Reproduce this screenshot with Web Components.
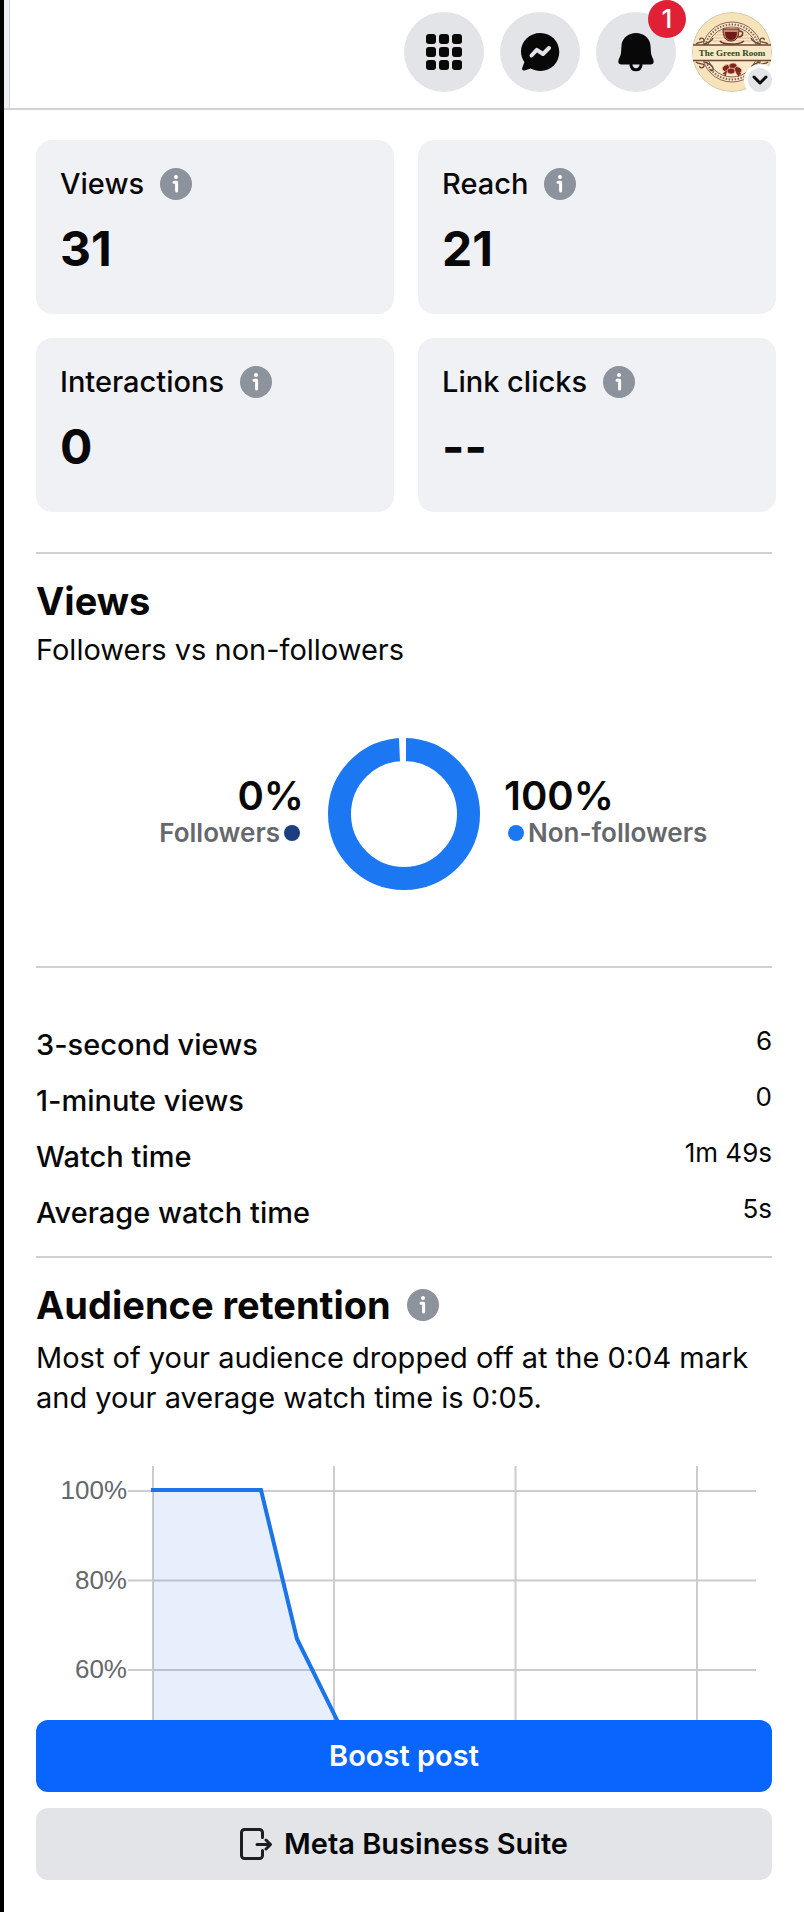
<!DOCTYPE html>
<html lang="en">
<head>
<meta charset="utf-8">
<meta name="viewport" content="width=device-width, initial-scale=1">
<title>Post insights</title>
<style>
  html { background: #fff; }
  body { margin: 0; font-family: Inter, "Liberation Sans", sans-serif; color: #080809; }
</style>
</head>
<body>
<insights-page></insights-page>
<script>
const define = (name, html) => {
  const template = document.createElement('template');
  template.innerHTML = html;
  customElements.define(name, class extends HTMLElement {
    constructor() {
      super();
      this.attachShadow({ mode: 'open' }).append(template.content.cloneNode(true));
    }
  });
};

define('info-button', `
  <style>
    :host { display: block; flex: none; width: 32px; height: 32px; }
    button { display: block; width: 32px; height: 32px; padding: 0; border: 0; background: none; }
    svg { display: block; }
  </style>
  <button type="button" aria-label="More information">
    <svg width="32" height="32" viewBox="0 0 32 32" aria-hidden="true">
      <circle cx="16" cy="16" r="16" fill="#8c939d"/>
      <circle cx="16" cy="9" r="2" fill="#fff"/>
      <path d="M14 14.3h2.6v8.6" fill="none" stroke="#fff" stroke-width="3" stroke-linecap="round" stroke-linejoin="round"/>
    </svg>
  </button>`);

define('round-button', `
  <style>
    :host { display: block; position: relative; width: 80px; height: 80px; }
    button { display: grid; place-items: center; width: 80px; height: 80px; padding: 0; border: 0;
      border-radius: 50%; background: #e2e4e8; color: #080809; overflow: hidden; }
    ::slotted([slot=badge]) { position: absolute; }
  </style>
  <button type="button"><slot></slot></button><slot name="badge"></slot>`);

define('top-bar', `
  <style>
    :host { display: flex; border-bottom: 2px solid #d0d1d3; height: 108px; }
    .edge { width: 5px; background: #eff0f4; border-right: 1px solid #d0d1d4; }
    nav { flex: 1; display: flex; justify-content: flex-end; gap: 16px; padding: 12px 32px 0 0; }
    svg { display: block; }
    .count { top: -12px; right: -10px; width: 38px; height: 38px; border-radius: 50%; background: #e02135;
      color: #fff; font-size: 26px; line-height: 38px; font-weight: 500; text-align: center; }
    .more { right: -4px; bottom: -4px; width: 24px; height: 24px; border: 4px solid #fff; border-radius: 50%;
      background: #e2e4e8; }
  </style>
  <div class="edge"></div>
  <nav aria-label="Account">
    <round-button>
      <svg width="36" height="36" viewBox="0 0 36 36" fill="#080809" role="img" aria-label="Menu">
        <rect width="10" height="10" rx="3"/><rect x="13" width="10" height="10" rx="3"/><rect x="26" width="10" height="10" rx="3"/>
        <rect y="13" width="10" height="10" rx="3"/><rect x="13" y="13" width="10" height="10" rx="3"/><rect x="26" y="13" width="10" height="10" rx="3"/>
        <rect y="26" width="10" height="10" rx="3"/><rect x="13" y="26" width="10" height="10" rx="3"/><rect x="26" y="26" width="10" height="10" rx="3"/>
      </svg>
    </round-button>
    <round-button>
      <svg width="40" height="40" viewBox="0 0 40 40" role="img" aria-label="Messenger">
        <path d="M20.500 1C9.800 1 1 9 1 19.500c0 4.200 1.400 7.700 3.400 10.600L2.200 36c-.6 1.700.6 2.900 2.300 2.400l6.200-1.800c2.900 1.500 6 2.400 9.800 2.400C31 39 39.300 30.500 39.300 20S31 1 20.500 1z" fill="#080809"/>
        <path d="M11.500 23.500l5.300-5.700 6.200 4.200 6-6" fill="none" stroke="#e2e4e8" stroke-width="4" stroke-linecap="round" stroke-linejoin="round"/>
      </svg>
    </round-button>
    <round-button>
      <svg width="40" height="40" viewBox="0 0 40 40" role="img" aria-label="Notifications">
        <path d="M20 1C12.500 1 6 6 5.500 13.500L5 21c-.2 3-2.700 6-2.700 8.500 0 2 1.200 2.900 3 2.900h29.400c1.800 0 3-.9 3-2.900 0-2.500-2.500-5.500-2.700-8.500l-.5-7.500C34 6 27.500 1 20 1z" fill="#080809"/>
        <path d="M14.800 32c.4 4 2.600 5.800 5.200 5.800s4.800-1.800 5.200-5.800" fill="none" stroke="#080809" stroke-width="3"/>
      </svg>
      <span slot="badge" class="count">1</span>
    </round-button>
    <round-button>
      <svg width="80" height="80" viewBox="0 0 80 80" role="img" aria-label="The Green Room profile">
        <circle cx="40" cy="40" r="39.500" fill="#f7e3ba" stroke="#d8c9a8"/>
        <g fill="none" stroke="#8a6350">
          <circle cx="40" cy="40" r="30" fill="#f8e9ca" stroke-width="1"/>
          <circle cx="40" cy="40" r="27.500" stroke-width="2" stroke-dasharray="1.500 1.500"/>
          <circle cx="40" cy="40" r="25"/>
          <path d="M26 20h28M23 23h34M21 26h38M20 29h40" stroke="#e2b994"/>
        </g>
        <path d="M1 33h78v15H1z" fill="#f8e8c6"/>
        <g fill="none" stroke="#6d4534" stroke-width="1.300">
          <path d="M1 33h78M1 48.500h78"/>
          <path d="M4 32c3-3 9-1 8-4s-5-2-4 0M12 32c4-1 8-3 9-6M76 32c-3-3-9-1-8-4s5-2 4 0M68 32c-4-1-8-3-9-6"/>
          <path d="M4 50c3 3 9 1 8 4s-5 2-4 0M12 50c4 1 8 3 9 6s-3 4-3 1M76 50c-3 3-9 1-8 4s5 2 4 0M68 50c-4 1-8 3-9 6"/>
        </g>
        <path d="M31 17h16c0 7-2 12-8 12s-8-5-8-12z" fill="#c58a70" stroke="#5c2219"/>
        <path d="M33 20h12c0 5-2 8-6 8s-6-3-6-8z" fill="#6f1c18"/>
        <path d="M47 19c5-1 5 6-1 6M28 29c3 4 19 4 24 0" fill="none" stroke="#6d3528" stroke-width="1.500"/>
        <g fill="#80261d" stroke="#e9bfa0" stroke-width=".8">
          <ellipse cx="34" cy="56" rx="4" ry="3" transform="rotate(-30 34 56)"/><ellipse cx="41" cy="54" rx="4" ry="3"/>
          <ellipse cx="46" cy="58" rx="4" ry="3" transform="rotate(30 46 58)"/><ellipse cx="39" cy="59" rx="4" ry="3"/>
        </g>
        <path d="M31 62l3-2-1 4M47 64l-2-3 4 1" fill="none" stroke="#80261d" stroke-width="1.500"/>
        <text x="40" y="44" text-anchor="middle" font-family="'Liberation Serif', serif" font-weight="700" font-size="9" fill="#244c1d">The Green Room</text>
      </svg>
      <span slot="badge" class="more">
        <svg width="24" height="24" viewBox="0 0 24 24" fill="none" stroke="#080809" stroke-width="3" stroke-linecap="round" stroke-linejoin="round" aria-hidden="true"><path d="M6 9l6 6 6-6"/></svg>
      </span>
    </round-button>
  </nav>`);

define('metric-card', `
  <style>
    :host { display: block; padding: 28px 24px 36px; border-radius: 16px; background: #f0f1f5; }
    .label { display: flex; align-items: center; gap: 16px; font-size: 29px; line-height: 32px; font-weight: 500; white-space: nowrap; }
    .value { margin-top: 20px; font-size: 48px; line-height: 58px; font-weight: 700; }
  </style>
  <div class="label"><slot name="label"></slot><info-button></info-button></div>
  <div class="value"><slot></slot></div>`);

define('page-section', `
  <style>
    :host { display: block; border-top: 2px solid #d0d1d3; }
    ::slotted(h2) { display: flex; align-items: center; gap: 16px; margin: 24px 0 0; font-size: 38px; line-height: 46px; font-weight: 700; }
    ::slotted(p) { margin: 6px 0 0; font-size: 29px; line-height: 40px; }
    :host([roomy]) ::slotted(p) { margin-top: 10px; }
  </style>
  <slot></slot>`);

define('follower-split', `
  <style>
    :host { display: grid; grid-template-columns: 1fr 152px 1fr; align-items: center; gap: 24px; padding: 68px 0 76px; }
    svg { display: block; }
    .side { padding-bottom: 4px; }
    .left { justify-self: end; text-align: right; }
    .share { font-size: 40px; line-height: 42px; font-weight: 600; }
    .name { display: flex; align-items: center; gap: 4px; padding: 0 4px; font-size: 26px; line-height: 32px; font-weight: 600; color: #65686c; }
    .name i { width: 16px; height: 16px; border-radius: 50%; background: #1b77f2; }
    .left i { background: #1d3f81; }
  </style>
  <div class="side left"><div class="share">0%</div><div class="name">Followers<i></i></div></div>
  <svg width="152" height="152" viewBox="0 0 152 152" role="img" aria-label="Non-followers 100%, followers 0%">
    <circle cx="76" cy="76" r="64.500" fill="none" stroke="#1b77f2" stroke-width="23"/>
    <path d="M71 0h7v24h-6z" fill="#fff"/>
  </svg>
  <div class="side"><div class="share">100%</div><div class="name"><i></i>Non-followers</div></div>`);

define('watch-stats', `
  <style>
    :host { display: block; padding: 57px 0 23px; }
    dl { display: grid; gap: 16px; margin: 0; }
    div { display: flex; justify-content: space-between; }
    dt { font-size: 29px; line-height: 40px; font-weight: 500; }
    dd { margin: 0; font-size: 26px; line-height: 32px; }
  </style>
  <dl>
    <div><dt>3-second views</dt><dd>6</dd></div>
    <div><dt>1-minute views</dt><dd>0</dd></div>
    <div><dt>Watch time</dt><dd>1m 49s</dd></div>
    <div><dt>Average watch time</dt><dd>5s</dd></div>
  </dl>`);

define('retention-chart', `
  <style>
    :host { display: block; margin-top: 48px; }
    svg { display: block; width: 100%; }
    text { font-family: "Liberation Sans", Arial, sans-serif; font-size: 26px; fill: #65686c; text-anchor: end; }
  </style>
  <svg viewBox="0 0 736 254" role="img" aria-label="Audience retention over time">
    <path d="M92 25h628M92 114.500h628M92 204h628M117 0v254M298 0v254M479.500 0v254M661 0v254" fill="none" stroke="#cbccd0" stroke-width="2"/>
    <path d="M117 24h108l36 149 40 81H117z" fill="#1b5fe0" fill-opacity=".1"/>
    <path d="M115 24h110l36 149 42 85" fill="none" stroke="#1b74e8" stroke-width="4"/>
    <text x="91" y="33">100%</text><text x="91" y="123">80%</text><text x="91" y="212">60%</text>
  </svg>`);

define('action-button', `
  <style>
    :host { display: block; --fill: #e2e4e8; --ink: #080809; }
    :host([primary]) { --fill: #0866ff; --ink: #fff; }
    button { display: flex; align-items: center; justify-content: center; gap: 12px; width: 100%; height: 72px;
      padding: 0; border: 0; border-radius: 12px; background: var(--fill); color: var(--ink);
      font-family: inherit; font-size: 29px; line-height: 40px; font-weight: 600; }
  </style>
  <button type="button"><slot name="icon"></slot><slot></slot></button>`);

define('insights-page', `
  <style>
    :host { display: block; border-left: 4px solid #000; }
    main { padding: 30px 32px 32px; }
    .cards { display: grid; grid-template-columns: 1fr 1fr; gap: 24px; margin: 0 -4px 40px 0; }
    .actions { display: grid; gap: 16px; }
    svg { display: block; }
  </style>
  <top-bar></top-bar>
  <main>
    <div class="cards">
      <metric-card><span slot="label">Views</span>31</metric-card>
      <metric-card><span slot="label">Reach</span>21</metric-card>
      <metric-card><span slot="label">Interactions</span>0</metric-card>
      <metric-card><span slot="label">Link clicks</span>--</metric-card>
    </div>
    <page-section>
      <h2>Views</h2>
      <p>Followers vs non-followers</p>
      <follower-split></follower-split>
    </page-section>
    <page-section><watch-stats></watch-stats></page-section>
    <page-section roomy>
      <h2>Audience retention <info-button></info-button></h2>
      <p>Most of your audience dropped off at the 0:04 mark and your average watch time is 0:05.</p>
      <retention-chart></retention-chart>
    </page-section>
    <div class="actions">
      <action-button primary>Boost post</action-button>
      <action-button>
        <svg slot="icon" width="32" height="32" viewBox="0 0 32 32" fill="none" stroke="#1c1e21" stroke-width="3" stroke-linecap="round" stroke-linejoin="round" aria-hidden="true">
          <path d="M22.500 9.500V4.500a3 3 0 0 0-3-3H4.500a3 3 0 0 0-3 3v23a3 3 0 0 0 3 3h15a3 3 0 0 0 3-3v-5M17 16.500h13M26 12l4.500 4.500L26 21"/>
        </svg>Meta Business Suite
      </action-button>
    </div>
  </main>`);
</script>
</body>
</html>
